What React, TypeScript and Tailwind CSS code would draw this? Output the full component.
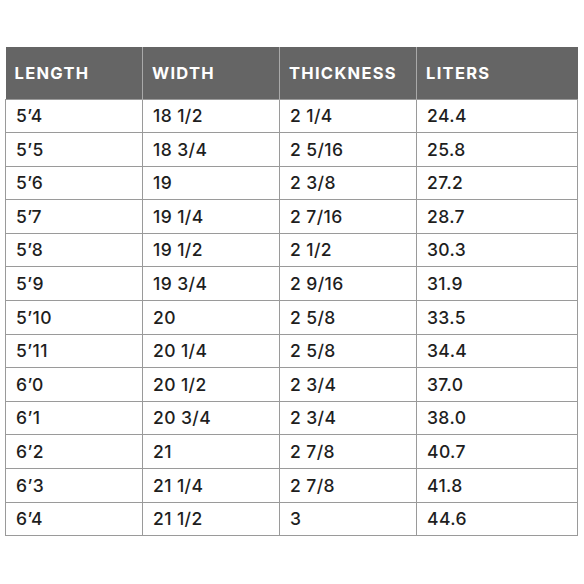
const rows: [string, string, string, string][] = [
  ["5’4", "18 1/2", "2 1/4", "24.4"],
  ["5’5", "18 3/4", "2 5/16", "25.8"],
  ["5’6", "19", "2 3/8", "27.2"],
  ["5’7", "19 1/4", "2 7/16", "28.7"],
  ["5’8", "19 1/2", "2 1/2", "30.3"],
  ["5’9", "19 3/4", "2 9/16", "31.9"],
  ["5’10", "20", "2 5/8", "33.5"],
  ["5’11", "20 1/4", "2 5/8", "34.4"],
  ["6’0", "20 1/2", "2 3/4", "37.0"],
  ["6’1", "20 3/4", "2 3/4", "38.0"],
  ["6’2", "21", "2 7/8", "40.7"],
  ["6’3", "21 1/4", "2 7/8", "41.8"],
  ["6’4", "21 1/2", "3", "44.6"],
];

const headers = ["LENGTH", "WIDTH", "THICKNESS", "LITERS"];

export default function App() {
  return (
    <div className="w-[584px] h-[584px] bg-white pt-[47px] pl-[5px]" style={{ fontFamily: "Inter, 'Noto Sans', sans-serif" }}>
      <table className="table-fixed border-collapse w-[572px] text-[#1e1e1e]">
        <colgroup>
          <col className="w-[137px]" />
          <col className="w-[137px]" />
          <col className="w-[137px]" />
          <col className="w-[161px]" />
        </colgroup>
        <thead>
          <tr className="h-[52px] bg-[#656565]">
            {headers.map((h, i) => (
              <th
                key={h}
                className={`text-left align-middle pl-[9px] pt-[1px] text-white font-bold text-[16.5px] tracking-[1.3px] ${i < 3 ? "border-r border-r-[#a9a9a9]" : ""}`}
              >
                {h}
              </th>
            ))}
          </tr>
        </thead>
        <tbody>
          {rows.map((r, ri) => (
            <tr key={ri} className="h-[33.6px]">
              {r.map((c, ci) => (
                <td
                  key={ci}
                  className="border border-[#9a9a9a] pl-[10px] text-[17.5px] tracking-[0.4px] font-medium align-middle leading-none"
                >
                  {c}
                </td>
              ))}
            </tr>
          ))}
        </tbody>
      </table>
    </div>
  );
}
